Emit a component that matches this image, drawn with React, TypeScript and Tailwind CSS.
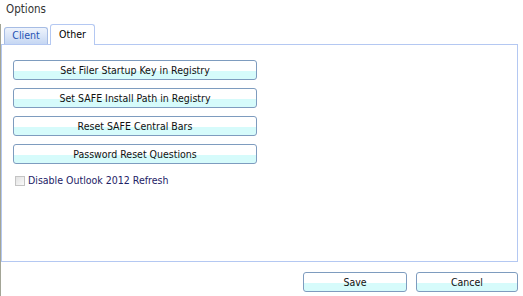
import React from "react";

const actions = [
  "Set Filer Startup Key in Registry",
  "Set SAFE Install Path in Registry",
  "Reset SAFE Central Bars",
  "Password Reset Questions",
];

function WinButton({ label, className }: { label: string; className?: string }) {
  return (
    <button
      className={
        "h-[20px] rounded-[3px] border border-[#7e9cbf] bg-[linear-gradient(to_bottom,#ffffff_0%,#ffffff_58%,#d6fbfb_58%,#d6fbfb_100%)] text-[10.5px] leading-[18px] text-[#111111] " +
        (className ?? "")
      }
    >
      {label}
    </button>
  );
}

export default function App() {
  return (
    <div className="flex h-[296px] w-[523px] flex-col bg-white font-['DejaVu_Sans_Condensed','Liberation_Sans',sans-serif]">
      {/* Title */}
      <div className="h-[24px] pl-[6px] pt-[2px] text-[11.5px] leading-[14px] text-[#333333]">
        Options
      </div>

      <div className="flex flex-1 flex-col border-l border-[#a3a596]">
        {/* Tabs */}
        <div className="flex h-[20px] items-end gap-[2px] pl-[3px]">
          <div className="flex h-[17px] w-[44px] items-center justify-center rounded-t-[3px] border border-b-0 border-[#a6bce4] bg-[linear-gradient(to_bottom,#eef3fc,#c6d7f3)] text-[10.5px] text-[#2552b3]">
            Client
          </div>
          <div className="relative z-10 -mb-px flex h-[21px] w-[45px] items-center justify-center rounded-t-[3px] border border-b-0 border-[#b4c8f2] bg-white text-[10.5px] text-black">
            Other
          </div>
        </div>

        {/* Panel */}
        <div className="mr-[5px] flex h-[218px] flex-col gap-[8px] border border-[#b4c8f2] px-[11px] pt-[15px]">
          {actions.map((a) => (
            <WinButton key={a} label={a} className="w-[244px]" />
          ))}
          <label className="mt-[1px] flex items-center gap-[3px] pl-[2px] text-[10.5px] text-[#1d2266]">
            <span className="h-[10px] w-[10px] border border-[#c4c4c4] bg-[linear-gradient(135deg,#e2e2e2,#fafafa)]" />
            Disable Outlook 2012 Refresh
          </label>
        </div>

        {/* Footer */}
        <div className="flex justify-end gap-[9px] pr-[5px] pt-[10px]">
          <WinButton label="Save" className="w-[104px]" />
          <WinButton label="Cancel" className="w-[102px]" />
        </div>
      </div>
    </div>
  );
}
